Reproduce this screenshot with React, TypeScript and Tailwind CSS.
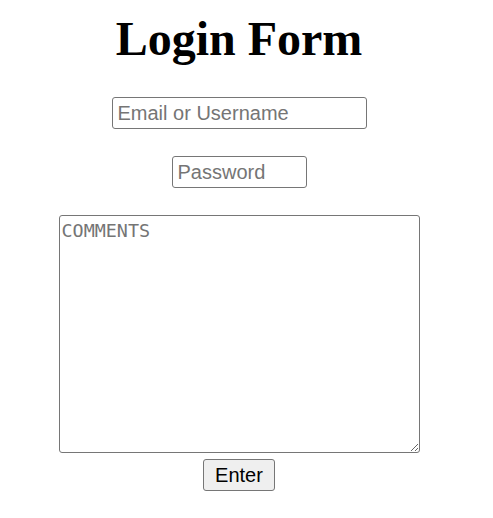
import React from "react";

export default function App() {
  return (
    <div className="w-[478px] bg-white min-h-[518px]">
      <div className="flex flex-col items-center">
        <h1 className="mt-[11px] text-[48px] leading-[55px] font-bold text-black [font-family:'Liberation_Serif','Times_New_Roman',serif]">
          Login Form
        </h1>
        <input
          type="text"
          placeholder="Email or Username"
          className="mt-[31px] w-[255px] h-[32px] border border-[#767676] rounded-[3px] pl-[5px] pr-[3px] text-[20px] text-black placeholder:text-[#757575] [font-family:'Liberation_Sans',Arial,sans-serif] outline-none"
        />
        <input
          type="password"
          placeholder="Password"
          className="mt-[27px] w-[135px] h-[32px] border border-[#767676] rounded-[3px] pl-[5px] pr-[3px] text-[20px] text-black placeholder:text-[#757575] [font-family:'Liberation_Sans',Arial,sans-serif] outline-none"
        />
        <textarea
          placeholder="COMMENTS"
          className="mt-[27px] w-[361px] h-[238px] border border-[#767676] rounded-[3px] pl-[2px] pr-[2px] pt-[4px] pb-[2px] text-[18.4px] leading-[21px] text-black placeholder:text-[#757575] [font-family:'DejaVu_Sans_Mono',monospace] outline-none resize"
        />
        <button
          type="button"
          className="mt-[6px] w-[72px] h-[32px] border border-[#767676] rounded-[3px] bg-[#efefef] text-[20px] text-black [font-family:'Liberation_Sans',Arial,sans-serif]"
        >
          Enter
        </button>
      </div>
    </div>
  );
}
